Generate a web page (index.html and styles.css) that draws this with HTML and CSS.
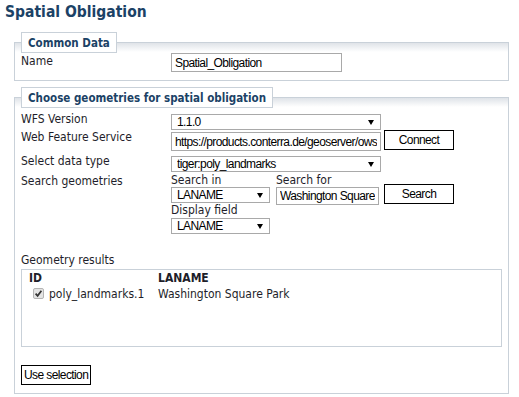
FILE: index.html
```html
<!DOCTYPE html>
<html lang="en">
<head>
  <meta charset="UTF-8">
  <title>Spatial Obligation</title>
  <link rel="stylesheet" href="styles.css">
</head>
<body>
  <h1 class="page-title">Spatial Obligation</h1>

  <!-- Common data -->
  <fieldset class="group group-common">
    <legend>Common Data</legend>
    <div class="form-row row-name">
      <label class="form-label" for="name">Name</label>
      <div class="form-field">
        <input type="text" id="name" class="text-input name-input" value="Spatial_Obligation">
      </div>
    </div>
  </fieldset>

  <!-- Geometry selection -->
  <fieldset class="group group-geometries">
    <legend>Choose geometries for spatial obligation</legend>

    <div class="form-row row-version">
      <label class="form-label">WFS Version</label>
      <div class="form-field">
        <span class="select-wrap wide-select">
          <select><option>1.1.0</option></select>
        </span>
      </div>
    </div>

    <div class="form-row row-service">
      <label class="form-label">Web Feature Service</label>
      <div class="form-field">
        <input type="text" class="text-input url-input" value="https://products.conterra.de/geoserver/ows">
        <button class="btn btn-connect">Connect</button>
      </div>
    </div>

    <div class="form-row row-type">
      <label class="form-label">Select data type</label>
      <div class="form-field">
        <span class="select-wrap wide-select">
          <select><option>tiger:poly_landmarks</option></select>
        </span>
      </div>
    </div>

    <div class="form-row row-search">
      <label class="form-label">Search geometries</label>
      <div class="form-field search-grid">
        <div class="search-col">
          <span class="small-label">Search in</span>
          <span class="select-wrap short-select">
            <select><option>LANAME</option></select>
          </span>
          <span class="small-label display-label">Display field</span>
          <span class="select-wrap short-select">
            <select><option>LANAME</option></select>
          </span>
        </div>
        <div class="search-col">
          <span class="small-label">Search for</span>
          <input type="text" class="text-input search-input" value="Washington Square Park">
        </div>
        <button class="btn btn-search">Search</button>
      </div>
    </div>

    <div class="results">
      <div class="results-title">Geometry results</div>
      <div class="results-box">
        <table class="results-table">
          <tr>
            <th class="col-id">ID</th>
            <th>LANAME</th>
          </tr>
          <tr>
            <td class="col-id">
              <span class="check">
                <svg width="9" height="9" viewBox="0 0 9 9"><path d="M1.6 4.6 L3.6 6.8 L7.4 1.8" fill="none" stroke="#333" stroke-width="1.7"/></svg>
              </span>poly_landmarks.1
            </td>
            <td>Washington Square Park</td>
          </tr>
        </table>
      </div>
    </div>

    <button class="btn btn-use">Use selection</button>
  </fieldset>
</body>
</html>
```

FILE: styles.css
```css
body {
  margin: 0;
  padding: 0 10px 0 5px;
  font-family: "DejaVu Sans Condensed", "DejaVu Sans", sans-serif;
  font-size: 12px;
  line-height: 14px;
  color: #1e1e2a;
  background-color: #fff;
}
.page-title {
  margin: 0;
  padding-top: 3px;
  font-size: 15.5px;
  line-height: 18px;
  font-weight: bold;
  color: #1b4266;
}
.group {
  margin: 0 0 0 9px;
  padding: 0 6px;
  border: 1px solid #c9d1d9;
  background: linear-gradient(to bottom, #dfe3e8, #fff 9px);
}
.group legend {
  padding: 3px 6px 2px;
  border: 1px solid #c9d1d9;
  background-color: #fff;
  font-size: 11.5px;
  line-height: 14px;
  font-weight: bold;
  color: #1b4266;
}
.group-common {
  margin-top: 11px;
  padding-bottom: 8px;
}
.group-geometries {
  margin-top: 6px;
  padding-bottom: 8px;
}
.form-row {
  display: grid;
  grid-template-columns: 150px 1fr;
  align-items: start;
}
.form-field {
  display: flex;
  align-items: flex-start;
  gap: 3px;
}
.row-name .form-label {
  padding-top: 1px;
}
.row-version {
  margin-top: 4px;
}
.row-version .form-field,
.row-type .form-field {
  padding-top: 2px;
}
.row-type {
  margin-top: 3px;
}
.row-search {
  margin-top: 2px;
}
.text-input,
.btn,
.select-wrap select {
  box-sizing: border-box;
  margin: 0;
  font-family: "Liberation Sans", Arial, sans-serif;
  font-size: 12px;
  letter-spacing: -0.6px;
  color: #000;
  background-color: #fff;
}
.text-input,
.select-wrap select {
  height: 19px;
  padding: 0 3px;
  border: 1px solid #a9a9a9;
}
.name-input {
  width: 171px;
}
.url-input {
  width: 210px;
  margin-top: 2px;
}
.select-wrap {
  position: relative;
  display: block;
}
.select-wrap select {
  width: 100%;
  height: 16px;
  padding-left: 5px;
  appearance: none;
}
.select-wrap::after {
  content: "";
  position: absolute;
  right: 7px;
  top: 6px;
  border-left: 3px solid transparent;
  border-right: 3px solid transparent;
  border-top: 5px solid #000;
  pointer-events: none;
}
.wide-select {
  width: 210px;
}
.short-select {
  width: 99px;
}
.btn {
  width: 70px;
  height: 20px;
  padding: 0 3px;
  border: 1px solid #000;
  white-space: nowrap;
}
.search-grid {
  gap: 6px;
}
.search-col {
  display: flex;
  flex-direction: column;
}
.small-label {
  line-height: 13px;
}
.display-label {
  margin-top: 1px;
  margin-bottom: 1px;
}
.search-input {
  width: 103px;
  height: 18px;
}
.btn-search {
  margin-top: 10px;
  margin-left: -1px;
}
.results {
  margin-top: 19px;
}
.results-box {
  box-sizing: border-box;
  height: 78px;
  margin-top: 2px;
  border: 1px solid #c9d1d9;
}
.results-table {
  border-collapse: collapse;
  margin: 1px 0 0 7px;
}
.results-table th,
.results-table td {
  padding: 0;
  text-align: left;
  vertical-align: top;
}
.results-table .col-id {
  width: 129px;
}
.results-table td {
  padding-top: 2px;
}
.check {
  display: inline-block;
  box-sizing: border-box;
  width: 11px;
  height: 11px;
  margin: 0 5px 0 4px;
  border: 1px solid #b4b4b4;
  border-radius: 2px;
  background-color: #e4e4e4;
  vertical-align: -1px;
}
.check svg {
  display: block;
}
.btn-use {
  display: block;
  margin-top: 18px;
  padding: 0 2px;
  text-align: left;
}
```
